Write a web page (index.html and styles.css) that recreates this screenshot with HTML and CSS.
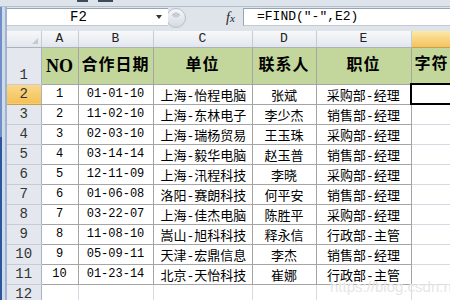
FILE: index.html
```html
<!DOCTYPE html>
<html lang="zh-CN">
<head>
    <meta charset="UTF-8">
    <title>Excel - FIND</title>
    <link rel="stylesheet" href="styles.css">
</head>
<body>
    <div class="ribbon-edge"><span class="tick"></span><span class="tick wide"></span></div>
    <div class="window">
        <div class="edge"></div>
        <div class="work">
            <div class="formula-bar">
                <div class="name-box"><span class="name">F2</span><span class="drop"></span></div>
                <div class="bar-gap"><span class="knob"></span><span class="fx"><i>f</i>x</span></div>
                <div class="formula">=FIND("-",E2)</div>
            </div>
            <table class="sheet">
                <colgroup>
                    <col class="c-rh"><col class="c-a"><col class="c-b"><col class="c-c"><col class="c-d"><col class="c-e"><col class="c-f">
                </colgroup>
                <tr class="col-heads">
                    <th class="corner"></th><th>A</th><th>B</th><th>C</th><th>D</th><th>E</th><th class="sel"></th>
                </tr>
                <tr class="head-row">
                    <th class="rh bottom">1</th>
                    <td class="en">NO</td><td>合作日期</td><td>单位</td><td>联系人</td><td>职位</td><td class="f left">字符</td>
                </tr>
                <tr>
                    <th class="rh sel">2</th>
                    <td class="num">1</td><td class="num">01-01-10</td><td class="left">上海-怡程电脑</td><td>张斌</td><td>采购部-经理</td><td class="f active"></td>
                </tr>
                <tr>
                    <th class="rh">3</th>
                    <td class="num">2</td><td class="num">11-02-10</td><td class="left">上海-东林电子</td><td>李少杰</td><td>销售部-经理</td><td class="f"></td>
                </tr>
                <tr>
                    <th class="rh">4</th>
                    <td class="num">3</td><td class="num">02-03-10</td><td class="left">上海-瑞杨贸易</td><td>王玉珠</td><td>采购部-经理</td><td class="f"></td>
                </tr>
                <tr>
                    <th class="rh">5</th>
                    <td class="num">4</td><td class="num">03-14-14</td><td class="left">上海-毅华电脑</td><td>赵玉普</td><td>销售部-经理</td><td class="f"></td>
                </tr>
                <tr>
                    <th class="rh">6</th>
                    <td class="num">5</td><td class="num">12-11-09</td><td class="left">上海-汛程科技</td><td>李晓</td><td>采购部-经理</td><td class="f"></td>
                </tr>
                <tr>
                    <th class="rh">7</th>
                    <td class="num">6</td><td class="num">01-06-08</td><td class="left">洛阳-赛朗科技</td><td>何平安</td><td>销售部-经理</td><td class="f"></td>
                </tr>
                <tr>
                    <th class="rh">8</th>
                    <td class="num">7</td><td class="num">03-22-07</td><td class="left">上海-佳杰电脑</td><td>陈胜平</td><td>采购部-经理</td><td class="f"></td>
                </tr>
                <tr>
                    <th class="rh">9</th>
                    <td class="num">8</td><td class="num">11-08-10</td><td class="left">嵩山-旭科科技</td><td>释永信</td><td>行政部-主管</td><td class="f"></td>
                </tr>
                <tr>
                    <th class="rh">10</th>
                    <td class="num">9</td><td class="num">05-09-11</td><td class="left">天津-宏鼎信息</td><td>李杰</td><td>销售部-经理</td><td class="f"></td>
                </tr>
                <tr>
                    <th class="rh">11</th>
                    <td class="num">10</td><td class="num">01-23-14</td><td class="left">北京-天怡科技</td><td>崔娜</td><td>行政部-主管</td><td class="f"></td>
                </tr>
                <tr class="empty">
                    <th class="rh">12</th>
                    <td></td><td></td><td></td><td></td><td></td><td class="f"></td>
                </tr>
            </table>
        </div>
    </div>
    <div class="watermark">https://blog.csdn.net</div>
</body>
</html>
```

FILE: styles.css
```css
body {
    margin: 0;
    width: 450px;
    height: 300px;
    overflow: hidden;
    position: relative;
    background: #ffffff;
    color: #000;
    font-family: "Liberation Mono", "Noto Sans CJK SC", monospace;
}
.ribbon-edge {
    height: 7px;
    box-sizing: border-box;
    background: #dde3ea;
    border-bottom: 1px solid #b4bfcc;
    display: flex;
    align-items: flex-start;
    gap: 10px;
    padding-left: 77px;
}
.tick {
    width: 11px;
    height: 2px;
    background: #3f4a5a;
}
.tick.wide {
    width: 15px;
}
.window {
    display: flex;
    height: 293px;
}
.edge {
    width: 7px;
    flex: none;
    background:
        linear-gradient(to right, #2c559e 0 2px, transparent 2px) 0 130px / 7px 100% no-repeat,
        linear-gradient(to right, #6f8fc6 0 2px, #d0dae8 2px 5px, #9fb3d3 5px 7px);
}
.work {
    flex: 1;
    min-width: 0;
    overflow: hidden;
}

/* formula bar */
.formula-bar {
    height: 24px;
    box-sizing: border-box;
    padding-top: 1px;
    display: flex;
    align-items: flex-start;
    background: #dfe4ea;
}
.name-box {
    width: 161px;
    height: 18px;
    box-sizing: border-box;
    flex: none;
    display: flex;
    align-items: center;
    background: #fff;
    border-top: 1px solid #98a4b3;
    border-bottom: 1px solid #c3cad4;
    position: relative;
    z-index: 1;
}
.name-box .name {
    flex: 1;
    text-align: center;
    font-size: 14px;
}
.name-box .drop {
    width: 18px;
    height: 100%;
    display: flex;
    align-items: center;
    justify-content: center;
}
.name-box .drop::after {
    content: '';
    border-left: 3px solid transparent;
    border-right: 3px solid transparent;
    border-top: 4px solid #333;
}
.bar-gap {
    width: 75px;
    flex: none;
    display: flex;
    align-items: center;
    height: 20px;
}
.knob {
    width: 20px;
    height: 20px;
    box-sizing: border-box;
    margin-left: -2px;
    border-radius: 50%;
    border: 1px solid #b5bec9;
    background: radial-gradient(ellipse 6px 4px at 9px 6px, #c9ced4 60%, transparent 70%), linear-gradient(#f6f7f9, #d4dae2);
}
.fx {
    margin-left: 40px;
    font-family: "Liberation Serif", serif;
    font-style: italic;
    font-size: 11px;
    color: #222;
}
.fx i {
    font-size: 14px;
}
.formula {
    flex: 1;
    height: 18px;
    box-sizing: border-box;
    background: #fff;
    border-top: 1px solid #98a4b3;
    border-left: 1px solid #98a4b3;
    border-bottom: 1px solid #c3cad4;
    padding-left: 13px;
    font-size: 13px;
    line-height: 16px;
    white-space: nowrap;
}

/* sheet grid */
.sheet {
    border-collapse: collapse;
    table-layout: fixed;
    width: 484px;
}
.c-rh { width: 34px; }
.c-a { width: 37px; }
.c-b { width: 75px; }
.c-c { width: 99px; }
.c-d { width: 64px; }
.c-e { width: 95px; }
.c-f { width: 80px; }
.sheet th,
.sheet td {
    padding: 0;
    overflow: hidden;
    white-space: nowrap;
    text-align: center;
    font-weight: normal;
}
.sheet tr {
    height: 20px;
}
.sheet td {
    border: 1px solid #a5a5a5;
    font-size: 13px;
}
.sheet td.f,
.sheet .empty td {
    border: 1px solid #d4d9e2;
}
.sheet td.num {
    font-size: 12px;
}
.sheet td.left {
    text-align: left;
    padding-left: 7px;
}
.sheet tr.col-heads {
    height: 16px;
}
.col-heads th {
    font-size: 13px;
    line-height: 14px;
    color: #222;
    background: linear-gradient(#f7f8fa, #e2e6ec);
    border-right: 1px solid #c6ccd5;
    border-bottom: 1px solid #a9b3c0;
}
.col-heads th.sel {
    background: linear-gradient(#fde8a6, #f3c25d);
    border-bottom-color: #c9a14c;
}
.corner {
    position: relative;
}
.corner::after {
    content: '';
    position: absolute;
    right: 3px;
    bottom: 3px;
    border-left: 6px solid transparent;
    border-bottom: 6px solid #c4c9d0;
}
.rh {
    font-size: 14px;
    line-height: 18px;
    color: #333;
    background: #e4e8ee;
    border-right: 1px solid #a9b3c0;
    border-bottom: 1px solid #c6ccd5;
}
.rh.bottom {
    vertical-align: bottom;
}
.rh.sel {
    background: linear-gradient(#fad98b, #f3c057);
    border-bottom-color: #c9a14c;
}
.sheet tr.head-row {
    height: 37px;
}
.head-row td {
    background: #c3d69b;
    font-weight: bold;
    font-size: 16px;
    line-height: 20px;
    letter-spacing: 1px;
}
.head-row td.en {
    font-family: "Liberation Serif", serif;
    font-size: 18px;
    letter-spacing: 0;
}
.sheet .head-row td.f {
    border: 1px solid #a5a5a5;
    border-left: none;
    padding-left: 3px;
}
.sheet td.active {
    border: 2px solid #000;
}
.watermark {
    position: absolute;
    left: 330px;
    top: 278px;
    font-family: "Liberation Sans", sans-serif;
    font-size: 15px;
    color: #e6e6e6;
    white-space: nowrap;
}
```
